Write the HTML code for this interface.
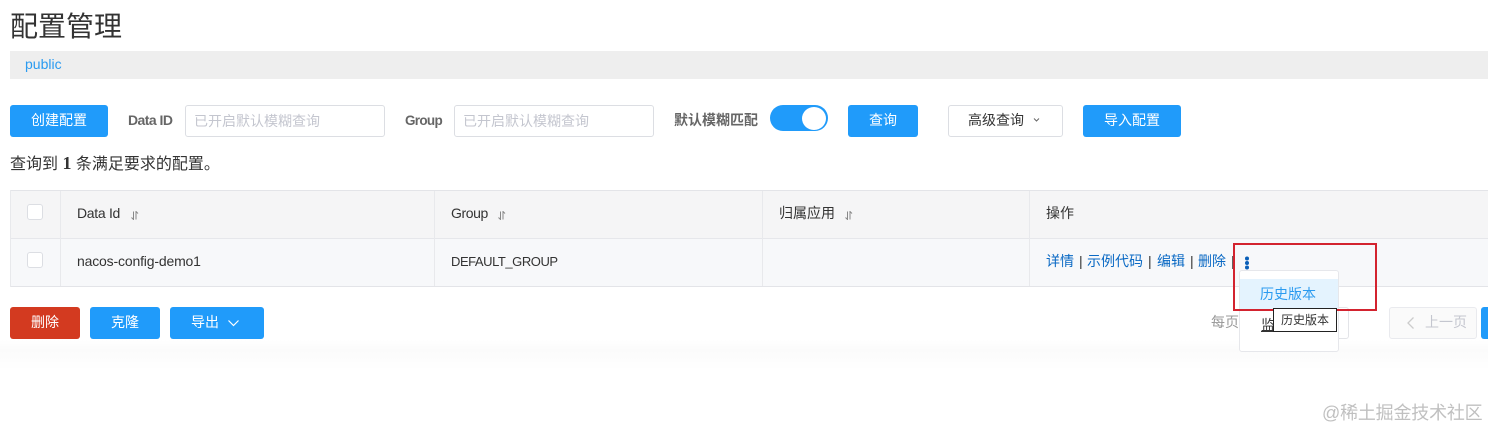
<!DOCTYPE html>
<html lang="zh"><head><meta charset="utf-8">
<style>
html,body{margin:0;padding:0;background:#fff}
body{width:1488px;height:430px;position:relative;overflow:hidden;font-family:"Liberation Sans","Noto Sans CJK SC",sans-serif;font-size:14px;color:#333}
.a{position:absolute;white-space:nowrap}
.btn{position:absolute;height:32px;line-height:30px;border-radius:3px;background:#209bfa;color:#fff;text-align:center;font-size:14px}
.inp{position:absolute;height:30px;line-height:30px;border:1px solid #dcdee3;border-radius:3px;color:#c4c6cf;width:198px;top:105px;background:#fff;text-indent:8px;font-size:14px}
.lb{position:absolute;top:110px;font-weight:bold;color:#666;font-size:14px;line-height:20px;white-space:nowrap}
.cb{position:absolute;width:14px;height:14px;border:1px solid #dcdee3;border-radius:3px;background:#fff}
.v{position:absolute;width:1px;background:#e8e9ec}
.s{position:absolute;top:211px}
.lnk{color:#0a69c4}
</style></head><body>
<div class="a" style="left:10px;top:8px;font-size:28px;line-height:38px;color:#333">配置管理</div>
<div class="a" style="left:10px;top:51px;width:1478px;height:28px;background:#eee"></div>
<div class="a" style="left:25px;top:54px;line-height:20px;color:#2b9bf0">public</div>

<div class="btn" style="left:10px;top:105px;width:98px">创建配置</div>
<div class="lb" style="left:128px;letter-spacing:-0.55px">Data ID</div>
<div class="inp" style="left:185px">已开启默认模糊查询</div>
<div class="lb" style="left:405px;top:111px;font-size:13.5px;letter-spacing:-0.7px">Group</div>
<div class="inp" style="left:454px">已开启默认模糊查询</div>
<div class="lb" style="left:674px">默认模糊匹配</div>
<div class="a" style="left:770px;top:105px;width:58px;height:26px;border-radius:13px;background:#209bfa"></div>
<div class="a" style="left:802px;top:106.5px;width:24px;height:23px;border-radius:12px/11.5px;background:#fff"></div>
<div class="btn" style="left:848px;top:105px;width:70px">查询</div>
<div class="a" style="left:948px;top:105px;width:113px;height:30px;border:1px solid #dcdee3;border-radius:3px;background:#fff"></div>
<div class="a" style="left:968px;top:110px;line-height:20px;color:#333">高级查询</div>
<svg class="a" style="left:1033px;top:117px" width="7" height="6" viewBox="0 0 7 6"><path d="M1 1.5 L3.5 4 L6 1.5" fill="none" stroke="#666" stroke-width="1"/></svg>
<div class="btn" style="left:1083px;top:105px;width:98px">导入配置</div>

<div class="a" style="left:10px;top:153px;line-height:20px;font-size:16px;color:#333">查询到 <b style="font-family:'Liberation Serif',serif;font-size:18px">1</b> 条满足要求的配置。</div>

<!-- table -->
<div class="a" style="left:10px;top:190px;width:1478px;height:95px;border-top:1px solid #e3e4e8;border-bottom:1px solid #e3e4e8;background:#f7f8fa"></div>
<div class="a" style="left:10px;top:191px;width:1478px;height:47px;background:#f5f5f6;border-bottom:1px solid #e6e7eb"></div>
<div class="v" style="left:10px;top:190px;height:97px"></div>
<div class="v" style="left:60px;top:191px;height:95px"></div>
<div class="v" style="left:434px;top:191px;height:95px"></div>
<div class="v" style="left:762px;top:191px;height:95px"></div>
<div class="v" style="left:1029px;top:191px;height:95px"></div>
<div class="cb" style="left:27px;top:204px"></div>
<div class="cb" style="left:27px;top:252px"></div>
<div class="a" style="left:77px;top:203px;line-height:20px;letter-spacing:-0.3px">Data Id</div>
<svg class="s" style="left:131px" width="8" height="9" viewBox="0 0 8 9"><path d="M2.5 .5V8.5L.5 6.5M5 8.5V.5L7 2.5" fill="none" stroke="#888" stroke-width="1"/></svg>
<div class="a" style="left:451px;top:203px;line-height:20px;letter-spacing:-0.4px">Group</div>
<svg class="s" style="left:498px" width="8" height="9" viewBox="0 0 8 9"><path d="M2.5 .5V8.5L.5 6.5M5 8.5V.5L7 2.5" fill="none" stroke="#888" stroke-width="1"/></svg>
<div class="a" style="left:779px;top:203px;line-height:20px">归属应用</div>
<svg class="s" style="left:845px" width="8" height="9" viewBox="0 0 8 9"><path d="M2.5 .5V8.5L.5 6.5M5 8.5V.5L7 2.5" fill="none" stroke="#888" stroke-width="1"/></svg>
<div class="a" style="left:1046px;top:203px;line-height:20px">操作</div>
<div class="a" style="left:77px;top:251px;line-height:20px;letter-spacing:-0.17px">nacos-config-demo1</div>
<div class="a" style="left:451px;top:251px;line-height:21px;font-size:13px;letter-spacing:-0.45px">DEFAULT_GROUP</div>
<div class="a" style="left:1046px;top:251px;line-height:20px"><span class="lnk">详情</span></div>
<div class="a" style="left:1079px;top:251px;line-height:20px">|</div>
<div class="a" style="left:1087px;top:251px;line-height:20px"><span class="lnk">示例代码</span></div>
<div class="a" style="left:1148px;top:251px;line-height:20px">|</div>
<div class="a" style="left:1157px;top:251px;line-height:20px"><span class="lnk">编辑</span></div>
<div class="a" style="left:1190px;top:251px;line-height:20px">|</div>
<div class="a" style="left:1198px;top:251px;line-height:20px"><span class="lnk">删除</span></div>
<div class="a" style="left:1231px;top:251px;line-height:20px">|</div>
<svg class="a" style="left:1244px;top:255px" width="6" height="15" viewBox="0 0 6 15"><circle cx="3" cy="3.5" r="2" fill="#0a5fb8"/><circle cx="3" cy="8" r="2" fill="#0a5fb8"/><circle cx="3" cy="12.5" r="2" fill="#0a5fb8"/></svg>

<!-- bottom fade -->
<div class="a" style="left:0;top:340px;width:1488px;height:30px;background:linear-gradient(#fff 0,#fbfbfb 35%,#fff 100%)"></div>

<!-- bottom buttons -->
<div class="btn" style="left:10px;top:307px;width:70px;background:#d33a20">删除</div>
<div class="btn" style="left:90px;top:307px;width:70px">克隆</div>
<div class="btn" style="left:170px;top:307px;width:94px"></div>
<div class="a" style="left:191px;top:312px;line-height:20px;color:#fff">导出</div>
<svg class="a" style="left:227px;top:319px" width="13" height="9" viewBox="0 0 13 9"><path d="M1.5 1.5 L6.5 6.5 L11.5 1.5" fill="none" stroke="#fff" stroke-width="1.2"/></svg>

<!-- pagination -->
<div class="a" style="left:1211px;top:312px;line-height:20px;color:#999">每页</div>
<div class="a" style="left:1300px;top:307px;width:47px;height:30px;border:1px solid #e3e4e8;border-radius:3px;background:#fff"></div>
<div class="a" style="left:1389px;top:307px;width:86px;height:30px;border:1px solid #e9eaee;border-radius:3px;background:#fafafa"></div>
<svg class="a" style="left:1406px;top:316px" width="9" height="14" viewBox="0 0 9 14"><path d="M7.5 1.5 L2 7 L7.5 12.5" fill="none" stroke="#ccc" stroke-width="1.3"/></svg>
<div class="a" style="left:1425px;top:312px;line-height:20px;color:#c4c6cf">上一页</div>
<div class="a" style="left:1481px;top:307px;width:12px;height:32px;border-radius:3px;background:#209bfa"></div>

<!-- dropdown -->
<div class="a" style="left:1239px;top:270px;width:98px;height:80px;background:#fff;border:1px solid #e6e7eb;border-radius:3px"></div>
<div class="a" style="left:1240px;top:279px;width:98px;height:30px;background:#e4f3fe"></div>
<div class="a" style="left:1260px;top:284px;line-height:20px;color:#2b9bf0">历史版本</div>
<div class="a" style="left:1261px;top:315px;line-height:20px;color:#333;text-decoration:underline">监</div>

<!-- red highlight -->
<div class="a" style="left:1233px;top:243px;width:140px;height:64px;border:2px solid #d3232f"></div>

<!-- tooltip -->
<div class="a" style="left:1273px;top:308px;width:62px;height:22px;line-height:22px;border:1px solid #222;background:#fff;text-align:center;font-size:12px;color:#333">历史版本</div>

<!-- watermark -->
<div class="a" style="left:1322px;top:401px;font-size:18px;letter-spacing:-0.2px;line-height:24px;color:#c0c0c0">@稀土掘金技术社区</div>
</body></html>
